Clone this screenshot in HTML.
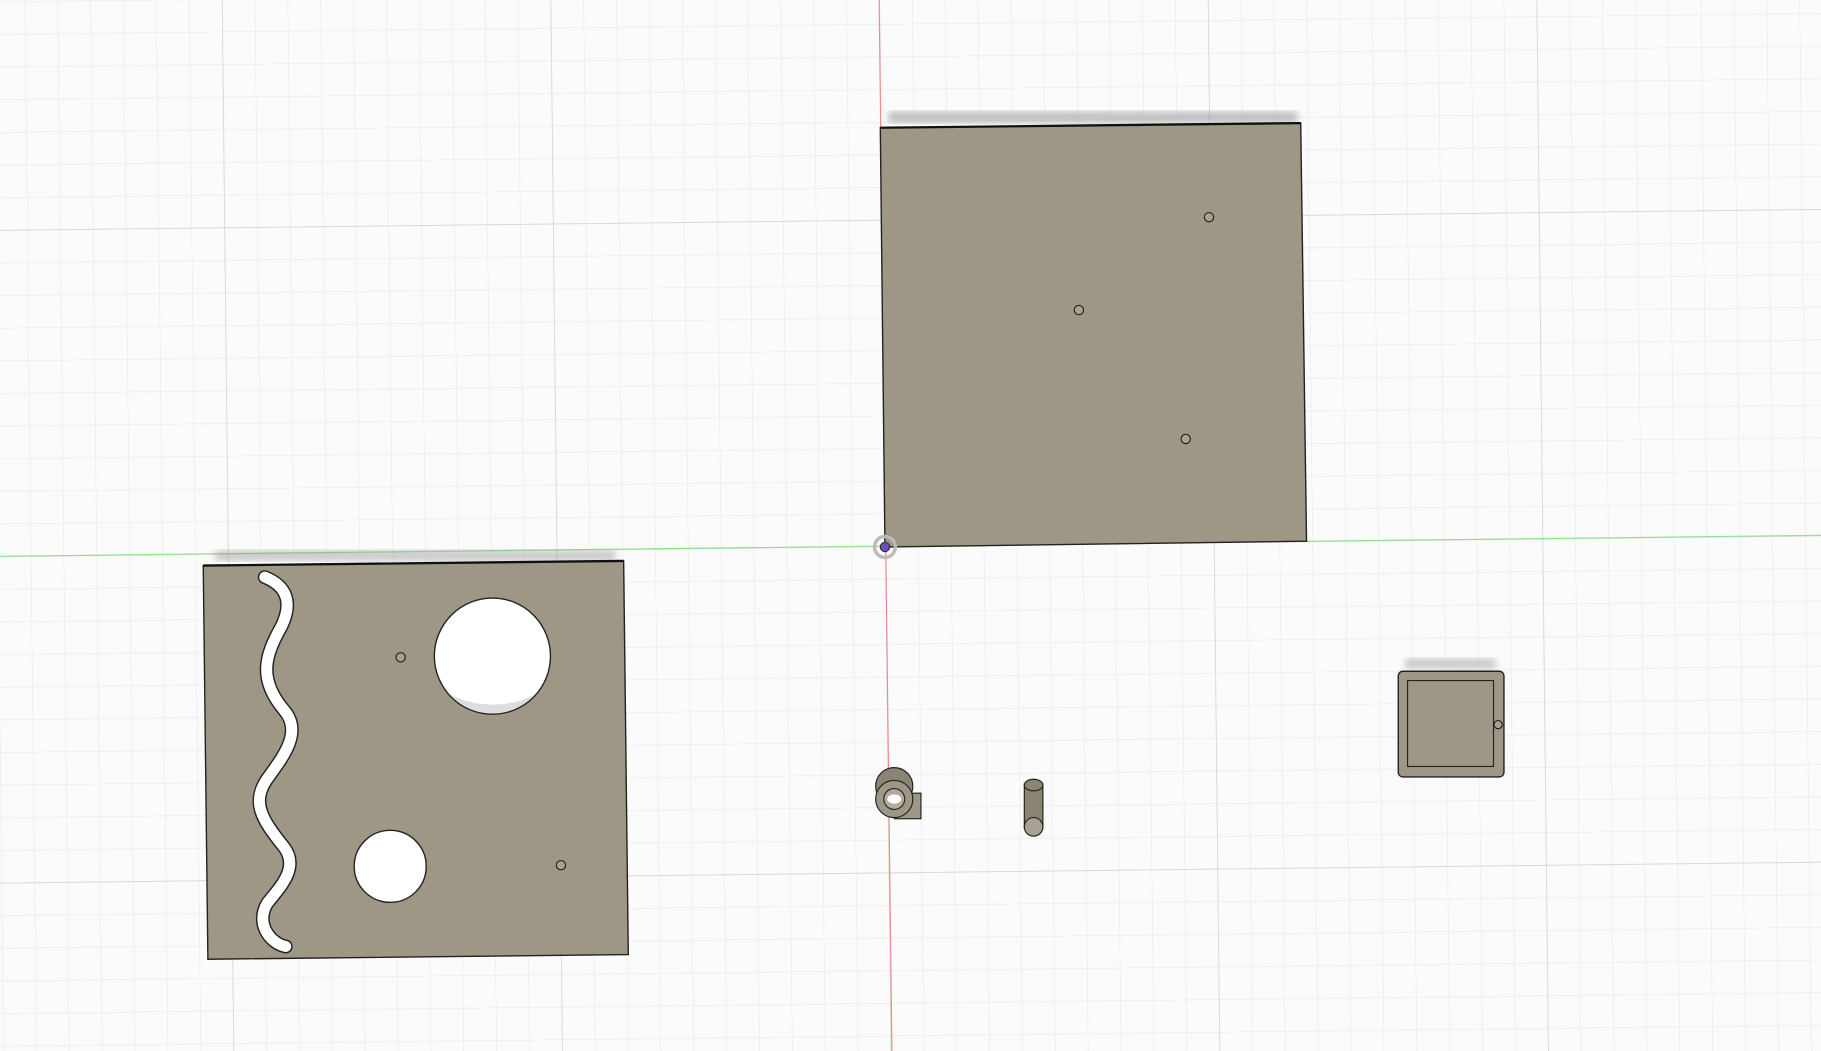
<!DOCTYPE html>
<html><head><meta charset="utf-8"><style>
html,body{margin:0;padding:0;background:#fbfbfb;width:1821px;height:1051px;overflow:hidden}
svg{display:block}
</style></head><body>
<svg width="1821" height="1051" viewBox="0 0 1568 905" preserveAspectRatio="none" xmlns="http://www.w3.org/2000/svg">
<defs>
<pattern id="minor" x="757" y="479" width="28.3" height="28.1" patternUnits="userSpaceOnUse" patternTransform="skewX(0.63) skewY(-0.66)">
<path d="M0 0V28.1M0 0H28.3" stroke="#e8e8e8" stroke-width="1" fill="none"/>
</pattern>
<pattern id="major" x="757" y="479" width="283" height="281" patternUnits="userSpaceOnUse" patternTransform="skewX(0.63) skewY(-0.66)">
<path d="M0 0V281M0 0H283" stroke="#d2d2d2" stroke-width="1.3" fill="none"/>
</pattern>
<filter id="blur"><feGaussianBlur stdDeviation="3"/></filter>
</defs>
<rect width="1568" height="905" fill="#fbfbfb"/>
<rect width="1568" height="905" fill="url(#minor)"/>
<rect width="1568" height="905" fill="url(#major)"/>
<line x1="757" y1="0" x2="768" y2="905" stroke="#f08a8a" stroke-width="1"/>
<line x1="0" y1="479" x2="1568" y2="461" stroke="#8fe08f" stroke-width="1"/>

<rect x="765" y="96" width="352" height="10" fill="#999" filter="url(#blur)" opacity=".6"/>
<rect x="185" y="474" width="345" height="9" fill="#999" filter="url(#blur)" opacity=".5"/>
<rect x="1210" y="567" width="78" height="9" fill="#999" filter="url(#blur)" opacity=".5"/>

<polygon points="758,110 1120,106 1125,466 762,471" fill="#9e9786" stroke="#222" stroke-width="1.2"/>
<line x1="758" y1="110" x2="1120" y2="106" stroke="#111" stroke-width="2"/>
<g fill="#a9a292" stroke="#222" stroke-width="1">
<circle cx="1041" cy="187" r="4"/><circle cx="929" cy="267" r="4"/><circle cx="1021" cy="378" r="4"/>
</g>
<circle cx="762" cy="471" r="9" fill="none" stroke="#bbb" stroke-width="3"/>
<circle cx="762" cy="471" r="4" fill="#6a4fc0" stroke="#333" stroke-width="1"/>

<polygon points="175,487 537,483 541,822 179,826" fill="#9e9786" stroke="#222" stroke-width="1.2"/>
<line x1="175" y1="487" x2="537" y2="483" stroke="#111" stroke-width="2"/>
<circle cx="424" cy="565" r="50" fill="#fff" stroke="#222" stroke-width="1.2"/>
<path d="M386 597 A50 50 0 0 0 462 597 A55 35 0 0 1 386 597Z" fill="#bbb" opacity=".5"/>
<circle cx="336" cy="746" r="31" fill="#fff" stroke="#222" stroke-width="1.2"/>
<g fill="#a9a292" stroke="#222" stroke-width="1">
<circle cx="345" cy="566" r="4"/><circle cx="483" cy="745" r="4"/>
</g>
<path d="M228 497 C248 505 252 520 242 540 C228 565 222 585 245 612 C260 630 245 650 232 668 C215 690 225 705 245 730 C258 748 240 765 230 778 C220 795 232 812 246 815" fill="none" stroke="#222" stroke-width="12" stroke-linecap="round"/>
<path d="M228 497 C248 505 252 520 242 540 C228 565 222 585 245 612 C260 630 245 650 232 668 C215 690 225 705 245 730 C258 748 240 765 230 778 C220 795 232 812 246 815" fill="none" stroke="#fff" stroke-width="9.5" stroke-linecap="round"/>

<rect x="1204" y="578" width="91" height="91" rx="4" fill="#9e9786" stroke="#222" stroke-width="1.2"/>
<rect x="1212" y="586" width="74" height="74" fill="#9e9786" stroke="#222" stroke-width="1"/>
<circle cx="1290" cy="624" r="3.5" fill="#a9a292" stroke="#222"/>

<rect x="770" y="683" width="23" height="22" fill="#9e9786" stroke="#222" stroke-width="1"/>
<circle cx="770" cy="677" r="16" fill="#8a8474" stroke="#222" stroke-width="1"/>
<circle cx="770" cy="688" r="16" fill="#9e9786" stroke="#222" stroke-width="1"/>
<circle cx="770" cy="688" r="9" fill="#b2ac9c" stroke="#222" stroke-width="1"/>
<ellipse cx="770" cy="688" rx="6" ry="4" fill="#fff"/>

<rect x="882" y="675" width="16" height="38" fill="#8a8474" stroke="#222" stroke-width="1"/>
<ellipse cx="890" cy="676" rx="8" ry="5" fill="#8a8474" stroke="#222"/>
<circle cx="890" cy="712" r="8" fill="#a9a292" stroke="#222"/>
</svg>
</body></html>
